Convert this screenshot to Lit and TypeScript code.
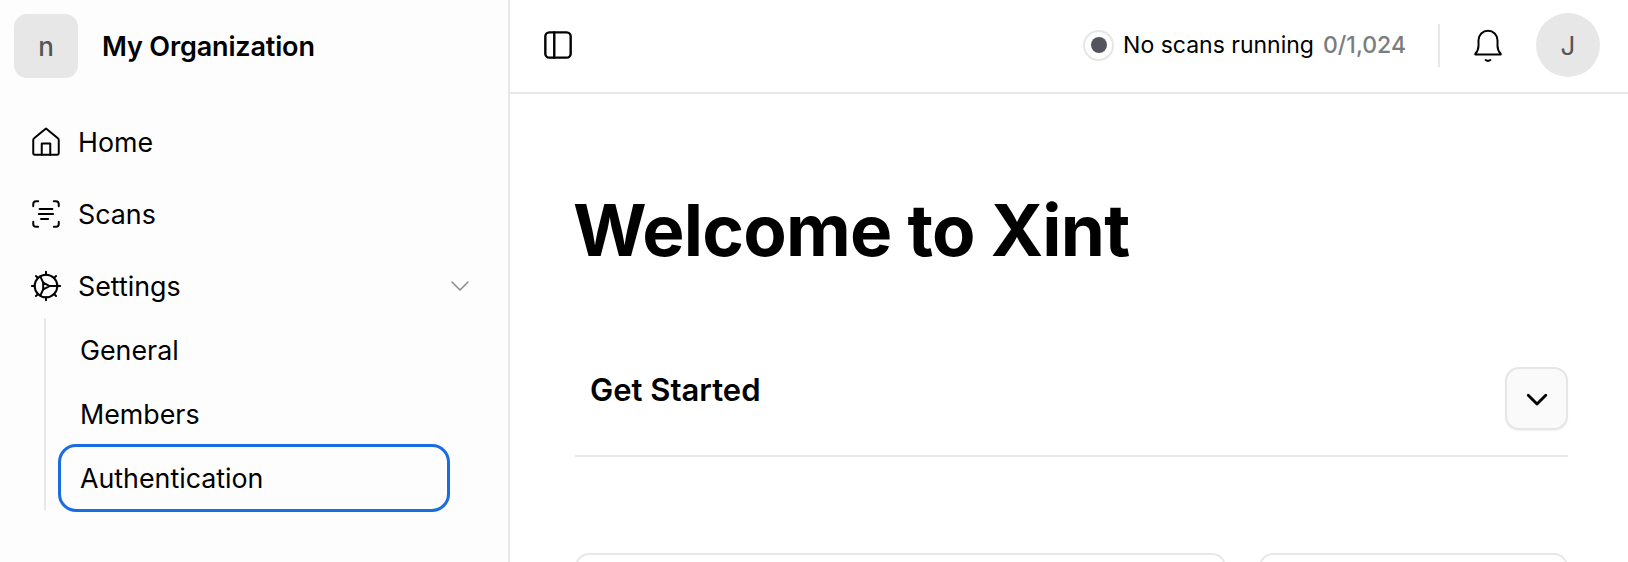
import { LitElement, html, css, svg } from 'lit';
import { customElement } from 'lit/decorators.js';

const icon = (body: unknown, size = 34, sw = 1.4) => html`
  <svg width=${size} height=${size} viewBox="0 0 24 24" fill="none" stroke="currentColor"
    stroke-width=${sw} stroke-linecap="round" stroke-linejoin="round">${body}</svg>
`;

const homeIcon = svg`
  <path d="M3 20V10.600c0-.5.2-1 .6-1.300L12 2.500l8.400 6.800c.4.3.6.8.6 1.300V20c0 .6-.4 1-1 1H4c-.6 0-1-.4-1-1z"/>
  <path d="M9 21v-8h6v8"/>
`;
const scansIcon = svg`
  <path d="M3 6.500V5c0-1.200.8-2 2-2h1.500M17.500 3H19c1.200 0 2 .8 2 2v1.500M21 17.500V19c0 1.200-.8 2-2 2h-1.500M6.500 21H5c-1.200 0-2-.8-2-2v-1.500"/>
  <path d="M7.500 8.500h9M7 12h10M8.500 15.500h5"/>
`;
const gearIcon = svg`
  <circle cx="12" cy="12" r="8"/>
  <path d="M10 9.600 14.500 12 10 14.400z"/>
  <path d="M10 9.600 8 5.200M10 14.400l-2 4.400M14.500 12H20"/>
  <path d="M12 2v2M12 20v2M2 12h2M20 12h2M4.900 4.900l1.500 1.500M17.600 17.600l1.500 1.500M19.100 4.900l-1.500 1.500M6.400 17.600l-1.500 1.500"/>
`;

@customElement('app-root')
export class AppRoot extends LitElement {
  static styles = css`
    :host {
      display: flex;
      width: 1628px;
      height: 562px;
      overflow: hidden;
      background: #fff;
      color: #000;
      font-family: Inter, 'Liberation Sans', sans-serif;
    }
    .sidebar {
      box-sizing: border-box;
      width: 510px;
      flex: none;
      background: #fdfdfd;
      border-right: 2px solid #e8e8e8;
      padding: 14px 0 0 14px;
    }
    .org {
      display: flex;
      align-items: center;
      gap: 24px;
      margin-bottom: 28px;
    }
    .org-logo {
      width: 64px;
      height: 64px;
      border-radius: 13px;
      background: #e7e7e7;
      color: #555;
      display: flex;
      align-items: center;
      justify-content: center;
      font-size: 26px;
      font-weight: 500;
    }
    .org-name {
      font-size: 27px;
      font-weight: 600;
      letter-spacing: -0.15px;
    }
    .nav-item {
      height: 72px;
      display: flex;
      align-items: center;
      gap: 15px;
      padding-left: 15px;
      font-size: 26.8px;
    }
    .nav-item svg {
      flex: none;
    }
    .chevron {
      margin-left: auto;
      margin-right: 36px;
      margin-top: 3px;
      color: #888;
    }
    .sub {
      margin: -4px 0 0 30px;
      border-left: 2px solid #e8e8e8;
      padding-left: 12px;
      display: flex;
      flex-direction: column;
      width: 392px;
    }
    .sub-item {
      box-sizing: border-box;
      height: 64px;
      display: flex;
      align-items: center;
      padding-left: 22px;
      font-size: 26.8px;
      border-radius: 18px;
    }
    .sub-item.active {
      height: 68px;
      margin: -2px 0;
      border: 3px solid #1a6de0;
      padding-left: 19px;
    }
    .main {
      flex: 1;
      min-width: 0;
    }
    .topbar {
      box-sizing: border-box;
      height: 94px;
      border-bottom: 2px solid #e8e8e8;
      display: flex;
      align-items: center;
      padding: 0 28px 2px 32px;
    }
    .status {
      margin-left: auto;
      display: flex;
      align-items: center;
      gap: 9px;
      font-size: 23px;
    }
    .status-dot {
      box-sizing: border-box;
      width: 31px;
      height: 31px;
      border-radius: 50%;
      border: 2px solid #e6e6e6;
      display: flex;
      align-items: center;
      justify-content: center;
    }
    .status-dot i {
      width: 16px;
      height: 16px;
      border-radius: 50%;
      background: #54545f;
    }
    .count {
      color: #7c7c7c;
      font-weight: 500;
    }
    .vr {
      width: 2px;
      height: 43px;
      background: #e8e8e8;
      margin: 0 29px 0 32px;
    }
    .avatar {
      width: 64px;
      height: 64px;
      border-radius: 50%;
      background: #e7e7e7;
      color: #555;
      display: flex;
      align-items: center;
      justify-content: center;
      font-size: 26px;
      margin-left: 29px;
    }
    .content {
      padding: 0 60px 0 65px;
    }
    h1 {
      margin: 0 0 0 -2px;
      padding-top: 92px;
      font-size: 71px;
      line-height: 88px;
      font-weight: 700;
      letter-spacing: -0.8px;
    }
    .started {
      box-sizing: border-box;
      display: flex;
      align-items: flex-start;
      justify-content: space-between;
      height: 90px;
      margin-top: 93px;
      border-bottom: 2px solid #e8e8e8;
    }
    .started h2 {
      margin: 0 0 0 15px;
      font-size: 31px;
      line-height: 46px;
      font-weight: 600;
    }
    .toggle {
      box-sizing: border-box;
      width: 63px;
      height: 63px;
      border-radius: 14px;
      border: 2px solid #e6e6e6;
      background: #fafafa;
      box-shadow: 0 1px 2px rgba(0, 0, 0, 0.06);
      display: flex;
      align-items: center;
      justify-content: center;
    }
    .cards {
      display: flex;
      gap: 33px;
      margin-top: 96px;
    }
    .card {
      height: 60px;
      border: 2px solid #e8e8e8;
      border-radius: 14px;
      box-sizing: border-box;
    }
    .card.wide {
      width: 651px;
    }
    .card.narrow {
      flex: 1;
    }
  `;

  render() {
    return html`
      <aside class="sidebar">
        <div class="org">
          <div class="org-logo">n</div>
          <div class="org-name">My Organization</div>
        </div>
        <div class="nav-item">${icon(homeIcon)}Home</div>
        <div class="nav-item">${icon(scansIcon)}Scans</div>
        <div class="nav-item">
          ${icon(gearIcon)}Settings
          <span class="chevron">${icon(svg`<path d="M4 8l8 8 8-8"/>`, 24, 1.5)}</span>
        </div>
        <div class="sub">
          <div class="sub-item">General</div>
          <div class="sub-item">Members</div>
          <div class="sub-item active">Authentication</div>
        </div>
      </aside>
      <main class="main">
        <header class="topbar">
          ${icon(svg`<rect x="2.500" y="2.500" width="19" height="19" rx="3"/><path d="M9.200 2.500v19"/>`, 32, 1.8)}
          <div class="status">
            <span class="status-dot"><i></i></span>
            <span>No scans running</span>
            <span class="count">0/1,024</span>
          </div>
          <div class="vr"></div>
          ${icon(svg`<path d="M4 17.500c1.500-1.500 2-2.500 2-5V9a6 6 0 0 1 12 0v3.500c0 2.500.5 3.500 2 5v.5H4z"/><path d="M10.500 21.500c1 .7 2 .7 3 0"/>`, 38, 1.25)}
          <div class="avatar">J</div>
        </header>
        <div class="content">
          <h1>Welcome to Xint</h1>
          <div class="started">
            <h2>Get Started</h2>
            <div class="toggle">${icon(svg`<path d="M5 9l7 7 7-7"/>`, 30, 2.3)}</div>
          </div>
          <div class="cards">
            <div class="card wide"></div>
            <div class="card narrow"></div>
          </div>
        </div>
      </main>
    `;
  }
}
